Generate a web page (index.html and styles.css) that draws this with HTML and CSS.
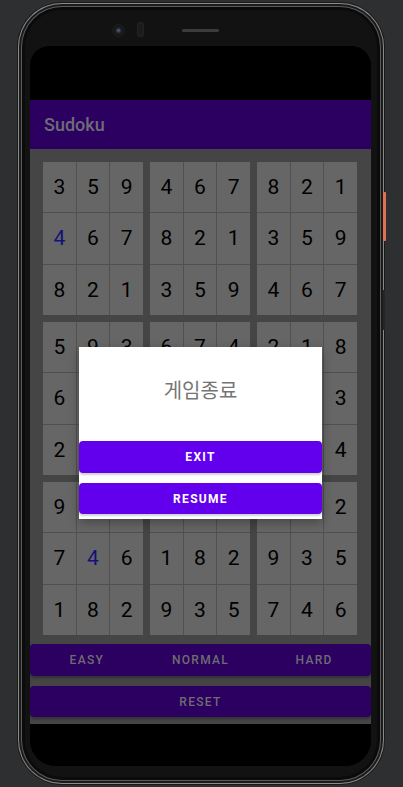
FILE: index.html
```html
<!DOCTYPE html>
<html>
<head>
<meta charset="utf-8">
<link rel="stylesheet" href="styles.css">
</head>
<body>
<div class="phone">
  <span class="power"></span>
  <span class="volume"></span>
  <div class="bezel">
    <span class="camera"></span>
    <span class="sensor"></span>
    <span class="speaker"></span>
  </div>
  <div class="screen">
    <div class="status"></div>
    <div class="appbar">Sudoku</div>
    <div class="content">
      <div class="board">
        <div class="block"><span>3</span><span>5</span><span>9</span><span class="user">4</span><span>6</span><span>7</span><span>8</span><span>2</span><span>1</span></div>
        <div class="block"><span>4</span><span>6</span><span>7</span><span>8</span><span>2</span><span>1</span><span>3</span><span>5</span><span>9</span></div>
        <div class="block"><span>8</span><span>2</span><span>1</span><span>3</span><span>5</span><span>9</span><span>4</span><span>6</span><span>7</span></div>
        <div class="block"><span>5</span><span>9</span><span>3</span><span>6</span><span>4</span><span>8</span><span>2</span><span>1</span><span>7</span></div>
        <div class="block"><span>6</span><span>7</span><span>4</span><span>9</span><span>2</span><span>5</span><span>3</span><span>8</span><span>9</span></div>
        <div class="block"><span>2</span><span>1</span><span>8</span><span>1</span><span>7</span><span>3</span><span>5</span><span>6</span><span>4</span></div>
        <div class="block"><span>9</span><span>3</span><span>5</span><span>7</span><span class="user">4</span><span>6</span><span>1</span><span>8</span><span>2</span></div>
        <div class="block"><span>7</span><span>4</span><span>6</span><span>1</span><span>8</span><span>2</span><span>9</span><span>3</span><span>5</span></div>
        <div class="block"><span>8</span><span>1</span><span>2</span><span>9</span><span>3</span><span>5</span><span>7</span><span>4</span><span>6</span></div>
      </div>
      <div class="levels">
        <button class="btn">EASY</button>
        <button class="btn">NORMAL</button>
        <button class="btn">HARD</button>
      </div>
      <button class="btn reset">RESET</button>
    </div>
    <div class="navbar"></div>
    <div class="dialog">
      <div class="dialog-title">게임종료</div>
      <button class="dbtn">EXIT</button>
      <button class="dbtn resume">RESUME</button>
    </div>
  </div>
</div>
</body>
</html>
```
FILE: styles.css
```css
* { box-sizing: border-box; }
html, body {
  margin: 0;
  padding: 0;
  background: #2e2f30;
  width: 403px;
  height: 787px;
  overflow: hidden;
  font-family: Roboto, "Liberation Sans", sans-serif;
}
.phone {
  position: relative;
  margin: 3px 0 0 18px;
  width: 366px;
  height: 781px;
  border-radius: 44px;
  background: #121212;
  padding: 0 13px 0 12px;
  box-shadow: 0 0 0 1px #1a1a1a, inset 0 0 0 1px #8a8a8a, inset 0 0 0 3px #1b1b1b, inset 0 0 0 4px #5a5a5a, inset 0 0 0 7px #0b0b0b;
}
.power {
  position: absolute;
  right: -2px;
  top: 189px;
  width: 3px;
  height: 49px;
  border-radius: 1px;
  background: #e0734f;
}
.volume {
  position: absolute;
  right: -1px;
  top: 287px;
  width: 2px;
  height: 40px;
  background: #262626;
}
.bezel {
  height: 43px;
  display: flex;
  align-items: flex-start;
  padding: 21px 0 0 82px;
}
.camera {
  width: 13px;
  height: 13px;
  border-radius: 50%;
  background: radial-gradient(circle at 50% 50%, #5a6a8a 0, #2a3040 2px, #151515 4px, #1c1c1c 6px);
}
.sensor {
  margin: -2px 0 0 12px;
  width: 7px;
  height: 15px;
  border-radius: 4px;
  background: #1c1c1c;
  box-shadow: inset 0 0 0 1px #242424;
}
.speaker {
  margin: 5px 0 0 38px;
  width: 37px;
  height: 3px;
  border-radius: 2px;
  background: #3c3c3c;
}
.screen {
  position: relative;
  width: 341px;
  height: 720px;
  background: #000;
  border-radius: 20px 20px 26px 26px;
  overflow: hidden;
  display: flex;
  flex-direction: column;
}
.status { height: 54px; background: #000; }
.appbar {
  height: 49px;
  background: #2b0060;
  color: #6f6b78;
  font-size: 18px;
  font-weight: 500;
  padding-left: 14px;
  display: flex;
  align-items: center;
}
.content {
  height: 575px;
  background: #454545;
  padding: 13px 0 7px;
}
.board {
  display: grid;
  grid-template-columns: repeat(3, 100px);
  grid-template-rows: repeat(3, 153px);
  gap: 7px;
  padding-left: 13px;
}
.block {
  display: grid;
  grid-template-columns: repeat(3, 1fr);
  grid-template-rows: repeat(3, 1fr);
  gap: 1px;
  background: #505050;
}
.block span {
  background: #666666;
  display: flex;
  align-items: center;
  justify-content: center;
  font-size: 21px;
  color: #000;
}
.block span.user { color: #12127a; }
.btn {
  border: 0;
  margin: 0;
  font-family: Roboto, "Liberation Sans", sans-serif;
  font-size: 12px;
  font-weight: 500;
  letter-spacing: 1.3px;
  color: #6d6d70;
  background: #2b0060;
  padding: 0;
}
.levels {
  margin-top: 9px;
  height: 32px;
  display: flex;
  border-radius: 4px;
  overflow: hidden;
  box-shadow: 0 2px 3px rgba(0,0,0,0.3);
}
.levels .btn { flex: 1; }
.reset {
  display: block;
  width: 100%;
  margin-top: 10px;
  height: 31px;
  border-radius: 4px;
  box-shadow: 0 2px 3px rgba(0,0,0,0.3);
}
.navbar { flex: 1; background: #000; }
.dialog {
  position: absolute;
  left: 49px;
  top: 301px;
  width: 243px;
  height: 172px;
  background: #fff;
  display: flex;
  flex-direction: column;
  box-shadow: 0 4px 10px rgba(0,0,0,0.3);
}
.dialog-title {
  height: 94px;
  display: flex;
  align-items: center;
  justify-content: center;
  padding-bottom: 9px;
  font-family: "Noto Sans CJK KR", sans-serif;
  font-size: 20px;
  color: #757575;
}
.dbtn {
  border: 0;
  margin: 0;
  height: 32px;
  background: #6200ee;
  color: #fff;
  border-radius: 4px;
  font-family: Roboto, "Liberation Sans", sans-serif;
  font-size: 12px;
  font-weight: 700;
  letter-spacing: 1.3px;
  box-shadow: 0 2px 2px rgba(0,0,0,0.18);
}
.resume { margin-top: 10px; height: 31px; }
```
